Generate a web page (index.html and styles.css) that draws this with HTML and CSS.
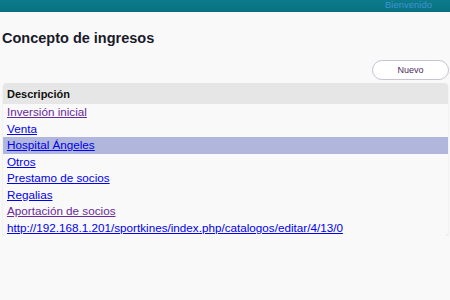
FILE: index.html
```html
<!DOCTYPE html>
<html lang="es">
<head>
    <meta charset="UTF-8">
    <title>Concepto de ingresos</title>
    <link rel="stylesheet" href="styles.css">
</head>
<body>
    <header class="topbar">
        <span class="welcome">Bienvenido</span>
    </header>

    <div class="content">
        <h1>Concepto de ingresos</h1>

        <div class="toolbar">
            <button class="btn-new">Nuevo</button>
        </div>

        <table class="grid">
            <thead>
                <tr><th>Descripción</th></tr>
            </thead>
            <tbody>
                <tr><td><a class="visited" href="#">Inversión inicial</a></td></tr>
                <tr><td><a href="#">Venta</a></td></tr>
                <tr class="selected"><td><a href="#">Hospital Ángeles</a></td></tr>
                <tr><td><a href="#">Otros</a></td></tr>
                <tr><td><a href="#">Prestamo de socios</a></td></tr>
                <tr><td><a href="#">Regalias</a></td></tr>
                <tr><td><a class="visited" href="#">Aportación de socios</a></td></tr>
                <tr><td><a href="#">http://192.168.1.201/sportkines/index.php/catalogos/editar/4/13/0</a></td></tr>
            </tbody>
        </table>
    </div>
</body>
</html>
```

FILE: styles.css
```css
body {
    margin: 0;
    padding: 0;
    background: #f9f9f9;
    font-family: 'Liberation Sans', Arial, sans-serif;
    color: #111;
}

.topbar {
    height: 12px;
    background: linear-gradient(to bottom, #0d7b8c, #08717f);
    display: flex;
    justify-content: flex-end;
    align-items: flex-end;
    padding-right: 18px;
    overflow: hidden;
}

.welcome {
    color: #3f92d4;
    font-size: 9.5px;
    line-height: 10px;
    margin-bottom: 2px;
}

.content {
    padding: 0 1px 0 3px;
}

h1 {
    font-size: 14.5px;
    font-weight: bold;
    line-height: 16px;
    margin: 18px 0 0 -1px;
    color: #1a1a2a;
}

.toolbar {
    display: flex;
    justify-content: flex-end;
    margin-top: 14px;
}

.btn-new {
    width: 77px;
    height: 20px;
    background: #ffffff;
    border: 1px solid #c9c2d2;
    border-radius: 10px;
    font-family: 'Liberation Sans', Arial, sans-serif;
    font-size: 9px;
    color: #4b2a5e;
    padding: 0;
}

.grid {
    width: 445px;
    margin-top: 3px;
    border-collapse: separate;
    border-spacing: 0;
    border-radius: 4px;
    box-shadow: 0 1px 2px rgba(0, 0, 0, 0.12);
    background: #f9f9f9;
}

.grid th {
    background: #e6e6e6;
    text-align: left;
    font-size: 11px;
    height: 21px;
    padding: 0 4px;
    border-radius: 4px 4px 0 0;
}

.grid td {
    font-size: 11.7px;
    height: 16.5px;
    padding: 0 4px;
    line-height: 14px;
}

.grid a {
    color: #0000ee;
}

.grid a.visited {
    color: #6a2a9a;
}

.grid tr.selected td {
    background: #b0b6dc;
}
```
